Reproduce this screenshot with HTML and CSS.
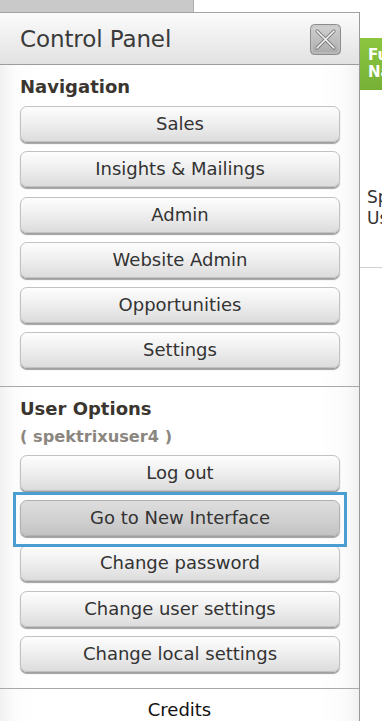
FILE: index.html
```html
<!DOCTYPE html>
<html>
<head>
<meta charset="utf-8">
<link rel="stylesheet" href="styles.css">
</head>
<body>
<div class="topstrip"></div>
<div class="layout">
  <div class="panel">
    <div class="panel-header">
      <h1 class="panel-title">Control Panel</h1>
      <button class="close-btn" aria-label="Close">
        <svg width="31" height="31" viewBox="0 0 31 31">
          <defs>
            <linearGradient id="cg" x1="0" y1="0" x2="0" y2="1">
              <stop offset="0" stop-color="#d4d4d4"/>
              <stop offset="1" stop-color="#a9a9a9"/>
            </linearGradient>
          </defs>
          <rect x="0.5" y="0.5" width="30" height="30" rx="4" fill="url(#cg)" stroke="#8c8c8c"/>
          <rect x="2" y="2" width="27" height="27" rx="3" fill="none" stroke="#c4c4c4" stroke-width="1"/>
          <path d="M7 7 L24 24 M24 7 L7 24" stroke="#7a7a7a" stroke-width="3.2" stroke-linecap="round"/>
          <path d="M7 7 L24 24 M24 7 L7 24" stroke="#f4f4f4" stroke-width="1.6" stroke-linecap="round"/>
        </svg>
      </button>
    </div>
    <div class="panel-body">
      <section class="group group-nav">
        <h2 class="group-title">Navigation</h2>
        <button class="btn">Sales</button>
        <button class="btn">Insights &amp; Mailings</button>
        <button class="btn">Admin</button>
        <button class="btn">Website Admin</button>
        <button class="btn">Opportunities</button>
        <button class="btn">Settings</button>
      </section>
      <section class="group group-user">
        <h2 class="group-title group-title-user">User Options</h2>
        <div class="username">( spektrixuser4 )</div>
        <button class="btn">Log out</button>
        <button class="btn btn-active highlighted">Go to New Interface</button>
        <button class="btn">Change password</button>
        <button class="btn">Change user settings</button>
        <button class="btn">Change local settings</button>
      </section>
      <div class="credits">Credits</div>
    </div>
  </div>
  <div class="side">
    <div class="side-badge">Full<br>Name</div>
    <div class="side-text">Spektrix<br>User</div>
    <div class="side-rule"></div>
  </div>
</div>
</body>
</html>
```

FILE: styles.css
```css
* { box-sizing: border-box; }
html, body { margin: 0; padding: 0; background: #fff; }
body {
  font-family: "DejaVu Sans", Verdana, sans-serif;
  color: #333;
  overflow: hidden;
  width: 382px;
  height: 721px;
}
.topstrip {
  width: 194px;
  height: 12px;
  background: #c9c9c9;
  border-right: 1px solid #b0b0b0;
}
.layout {
  display: flex;
  align-items: flex-start;
}
.panel {
  width: 360px;
  flex: none;
  border-top: 1px solid #a3a3a3;
  border-right: 1px solid #9a9a9a;
  background: #fff;
}
.panel-header {
  height: 52px;
  display: flex;
  align-items: center;
  justify-content: space-between;
  padding: 0 18px 0 20px;
  background: linear-gradient(#fbfbfb, #e2e2e2);
  border-bottom: 1px solid #9c9c9c;
}
.panel-title {
  margin: 0;
  font-weight: normal;
  font-size: 23px;
  color: #3a3a3a;
  letter-spacing: -0.1px;
  line-height: 28px;
}
.close-btn {
  width: 31px;
  height: 31px;
  padding: 0;
  border: 0;
  background: none;
  display: block;
  margin-top: 2px;
}
.close-btn svg { display: block; }
.panel-body {
  background: linear-gradient(90deg, #f1f1f1 0, #fcfcfc 14px, #fff 40px, #fff 320px, #fbfbfb 345px, #f1f1f1 359px);
}
.group {
  border-bottom: 1px solid #a8a8a8;
  display: flex;
  flex-direction: column;
  padding-left: 20px;
  padding-right: 19px;
}
.group-nav { padding-top: 11px; padding-bottom: 8px; }
.group-user { padding-top: 11px; padding-bottom: 6.5px; }
.group-title {
  margin: 0 0 8px 0;
  font-size: 18px;
  font-weight: bold;
  color: #3b3530;
  line-height: 22px;
}
.group-title-user { margin-bottom: 6px; }
.username {
  font-size: 16.2px;
  font-weight: bold;
  color: #8c8680;
  line-height: 22px;
  margin: 0 0 7px 0;
}
.btn {
  font-family: inherit;
  font-size: 18px;
  color: #333;
  height: 36px;
  width: 100%;
  margin: 0 0 9.3px 0;
  padding: 0;
  border: 1px solid #c2c2c2;
  border-radius: 7px;
  background: linear-gradient(#fdfdfd, #f0f0f0 45%, #dcdcdc);
  box-shadow: 0 1.5px 1px #a0a0a0;
  line-height: 34px;
  text-align: center;
}
.btn-active {
  background: linear-gradient(#dedede, #d2d2d2 50%, #c3c3c3);
  border-color: #b0b0b0;
}
.highlighted { position: relative; }
.highlighted::after {
  content: "";
  position: absolute;
  top: -9px;
  bottom: -12px;
  left: -8px;
  right: -8px;
  border: 3px solid #4b9ed0;
  pointer-events: none;
}
.credits {
  text-align: center;
  font-size: 18px;
  line-height: 22px;
  color: #111;
  padding: 10px 0 0;
  height: 32px;
}
.side {
  flex: 1;
  overflow: hidden;
  white-space: nowrap;
  min-width: 0;
}
.side-badge {
  margin-top: 26px;
  height: 52px;
  background: linear-gradient(#8cc63f, #76b136);
  color: #fff;
  font-weight: bold;
  font-size: 15px;
  line-height: 17px;
  padding: 9px 0 0 8px;
}
.side-text {
  margin-top: 97px;
  font-size: 17px;
  line-height: 21px;
  color: #333;
  padding-left: 7px;
}
.side-rule {
  margin-top: 38px;
  border-top: 1px solid #d0d0d0;
}
```
